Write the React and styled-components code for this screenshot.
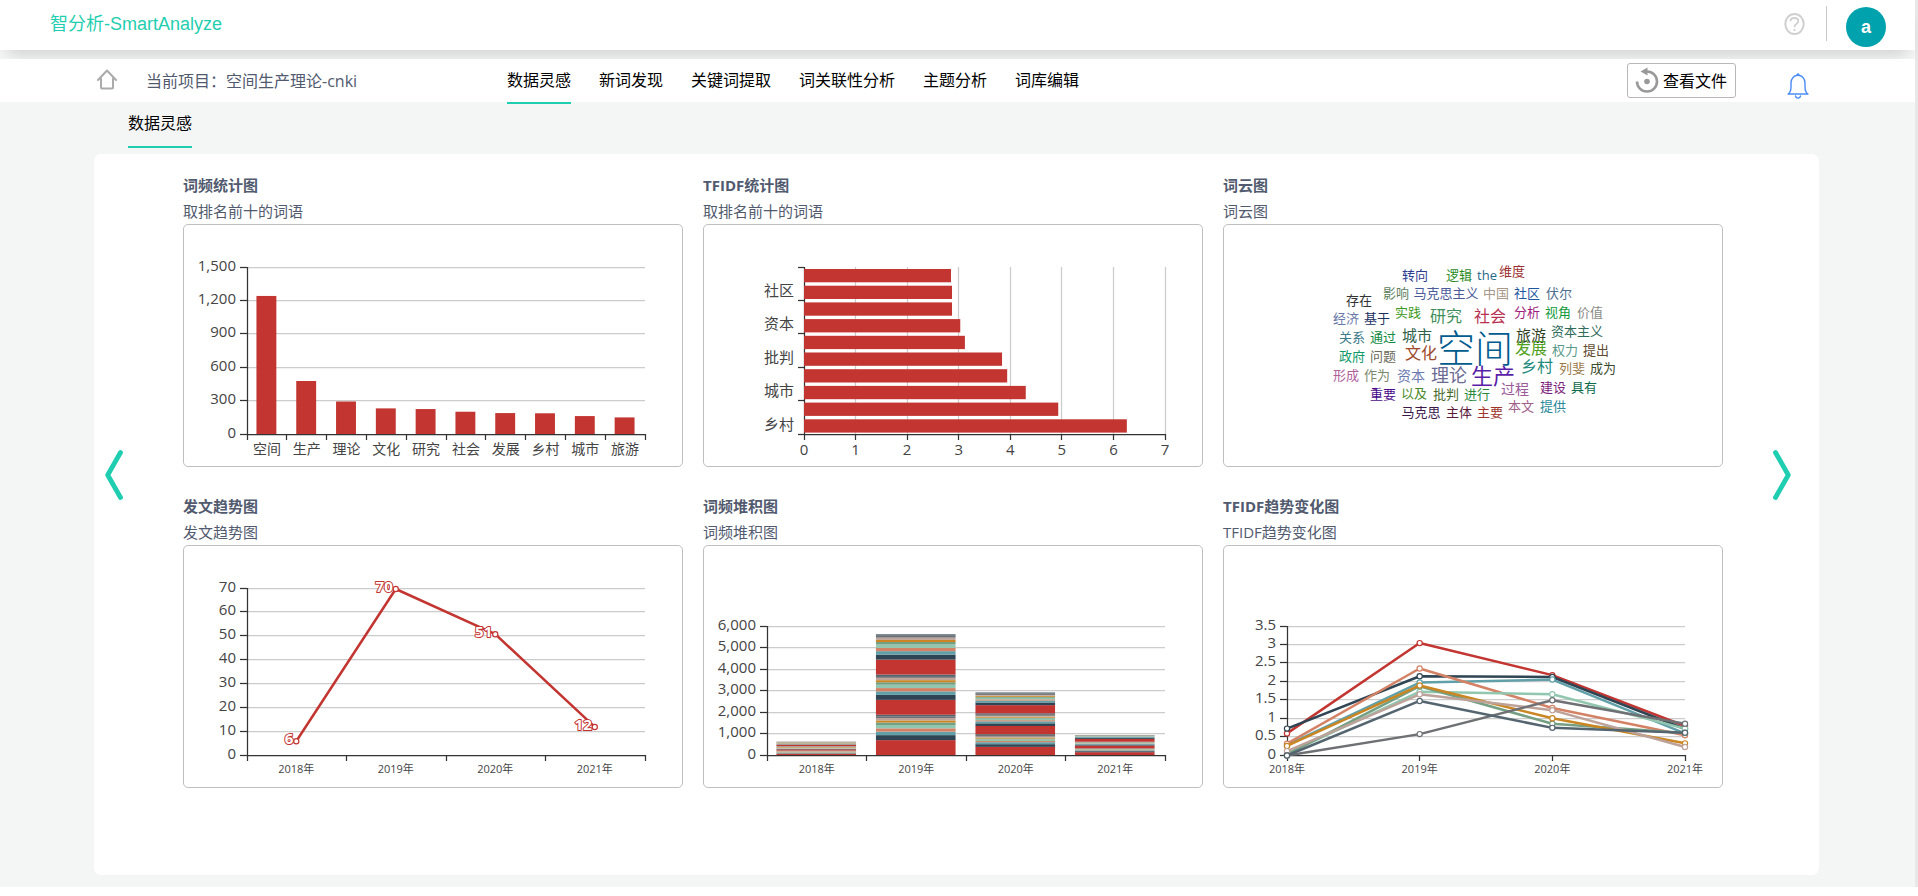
import React from "react";
import styled, { createGlobalStyle } from "styled-components";

const GlobalStyle = createGlobalStyle`
  *, *::before, *::after { box-sizing: border-box; }
  body {
    margin: 0;
    background: #ffffff;
    color: #515a6e;
    font-family: "Open Sans", "Noto Sans CJK SC", sans-serif;
    font-size: 16px;
    font-weight: 400;
  }
  a { color: inherit; text-decoration: none; }
  button { font: inherit; color: inherit; cursor: pointer; }
`;

const ACCENT = "#1fceb0";
const SERIES = [
  "#c23531", "#2f4554", "#61a0a8", "#d48265", "#91c7ae",
  "#749f83", "#ca8622", "#bda29a", "#6e7074", "#546570",
];

/* ---------- page frame ---------- */

const Page = styled.div`
  background: #f4f6f5;
  border-right: 3px solid #e8e8e8;
  margin-bottom: 9px;
  padding-bottom: 12px;
`;

const Header = styled.header`
  display: flex;
  align-items: center;
  height: 50px;
  padding: 0 29px 0 50px;
  background: #ffffff;
  box-shadow: 0 12px 16px -8px rgba(0, 0, 0, 0.16);
`;

const Brand = styled.a`
  margin-right: auto;
  padding-bottom: 2px;
  font-family: "Liberation Sans", "Noto Sans CJK SC", sans-serif;
  font-size: 18px;
  line-height: 24px;
  && { color: ${ACCENT}; }
`;

const IconButton = styled.button`
  display: flex;
  padding: 0;
  border: 0;
  background: none;
`;

const HelpButton = styled(IconButton)`
  margin-bottom: 3px;
`;

const HeaderDivider = styled.span`
  width: 1px;
  height: 35px;
  margin: 0 19px 3px 21px;
  background: #c8c8c8;
`;

const Avatar = styled.button`
  width: 40px;
  height: 40px;
  margin-top: 4px;
  padding: 0;
  border: 0;
  border-radius: 50%;
  background: #00a2ae;
  && { color: #ffffff; font-family: "Liberation Sans", sans-serif; font-weight: 700; font-size: 18px; }
`;

const NavBar = styled.nav`
  position: relative;
  display: flex;
  height: 43px;
  margin-top: 9px;
  padding: 0 106px 0 97px;
  background: #ffffff;
`;

const ProjectArea = styled.div`
  display: flex;
  align-items: center;
  gap: 29px;
  flex: 0 0 410px;
  padding-bottom: 2px;
  white-space: nowrap;
`;

const Tabs = styled.div`
  display: flex;
  gap: 28px;
  margin-right: auto;
  white-space: nowrap;
`;

const Tab = styled.a`
  height: 45px;
  line-height: 43px;
  color: #000000;
  border-bottom: 2px solid ${(p) => (p.$active ? ACCENT : "transparent")};
`;

const NavActions = styled.div`
  display: flex;
  align-items: center;
  gap: 51px;
`;

const FilesButton = styled.button`
  display: flex;
  align-items: center;
  gap: 4px;
  height: 35px;
  padding: 0 8px 2px 7px;
  border: 1px solid #b8b8b8;
  border-radius: 3px;
  background: #ffffff;
  && { color: #000000; }
`;

const BellSlot = styled.div`
  padding-top: 10px;
`;

const SubTabs = styled.div`
  display: flex;
  padding: 0 128px 6px;
`;

const SubTab = styled.a`
  height: 46px;
  line-height: 42px;
  color: #000000;
  border-bottom: 2px solid ${ACCENT};
`;

/* ---------- chart panel ---------- */

const Panel = styled.main`
  display: flex;
  min-height: 721px;
  margin: 0 96px 0 94px;
  padding: 18px 28px 18px 11px;
  border-radius: 7px;
  background: #ffffff;
`;

const PageArrow = styled(IconButton)`
  align-self: flex-start;
  width: ${(p) => (p.$next ? "68px" : "78px")};
  margin-top: 278px;
  justify-content: ${(p) => (p.$next ? "flex-end" : "flex-start")};
`;

const ChartGrid = styled.div`
  flex: 1;
  min-width: 0;
  display: grid;
  grid-template-columns: repeat(3, minmax(0, 1fr));
  align-content: start;
  gap: 26px 20px;
`;

const Title = styled.h2`
  margin: 0;
  font-size: 15px;
  line-height: 26px;
  font-weight: 700;
`;

const Subtitle = styled.p`
  margin: 0;
  font-size: 15px;
  line-height: 26px;
`;

const Frame = styled.div`
  height: 243px;
  border: 1px solid #bfbfbf;
  border-radius: 5px;
`;

const ChartSvg = styled.svg`
  display: block;
  width: 100%;
  height: 100%;
`;

const AxisText = styled.text`
  fill: #444444;
  font-size: ${(p) => p.$size}px;
  text-anchor: ${(p) => p.$anchor || "middle"};
`;

const PointLabel = styled.text`
  fill: #ffffff;
  stroke: #c23531;
  stroke-width: 2px;
  stroke-linejoin: round;
  paint-order: stroke;
  font-size: 15px;
  font-weight: 700;
  text-anchor: end;
`;

const CloudWord = styled.text`
  fill: ${(p) => p.$color};
  font-size: ${(p) => p.$size}px;
  font-weight: ${(p) => (p.$size > 30 ? 300 : 400)};
  text-anchor: middle;
`;

/* ---------- chart geometry ---------- */

const LEFT = 64;
const RIGHT = 462;
const BOTTOM = 210;
const YEARS = ["2018年", "2019年", "2020年", "2021年"];
const snap = (v) => Math.round(v - 0.5) + 0.5;

function Chart({ label, children }) {
  return (
    <ChartSvg viewBox="1 1 498 241" role="img" aria-label={label}>
      {children}
    </ChartSvg>
  );
}

function ValueAxis({ labels, top }) {
  const step = (BOTTOM - top) / (labels.length - 1);
  return (
    <g strokeWidth="1.25">
      {labels.map((text, i) => {
        const y = snap(BOTTOM - i * step);
        return (
          <g key={text}>
            {i > 0 && <line x1={LEFT} x2={RIGHT} y1={y} y2={y} stroke="#cccccc" />}
            <line x1={LEFT - 7} x2={LEFT} y1={y} y2={y} stroke="#333333" />
            <AxisText $size={15} $anchor="end" x={LEFT - 11} y={y + 3}>{text}</AxisText>
          </g>
        );
      })}
    </g>
  );
}

function AxisLines({ top, ticks, left = LEFT }) {
  return (
    <g stroke="#333333" strokeWidth="1.25">
      <line x1={snap(left)} x2={snap(left)} y1={top} y2={BOTTOM + 1} />
      <line x1={left} x2={RIGHT + 1} y1={BOTTOM + 0.5} y2={BOTTOM + 0.5} />
      {ticks.map((x) => (
        <line key={x} x1={snap(x)} x2={snap(x)} y1={BOTTOM} y2={BOTTOM + 6} />
      ))}
    </g>
  );
}

const bandTicks = (n) => Array.from({ length: n + 1 }, (_, i) => LEFT + (i * (RIGHT - LEFT)) / n);

function YearLabels({ xs }) {
  return xs.map((x, i) => (
    <AxisText key={YEARS[i]} $size={11} x={x} y={228}>{YEARS[i]}</AxisText>
  ));
}

/* ---------- charts ---------- */

const FREQUENCY = [
  ["空间", 1240], ["生产", 476], ["理论", 292], ["文化", 230], ["研究", 224],
  ["社会", 200], ["发展", 188], ["乡村", 186], ["城市", 161], ["旅游", 149],
];

function FrequencyChart() {
  const band = (RIGHT - LEFT) / 10;
  return (
    <Chart label="词频统计图">
      <ValueAxis top={43} labels={["0", "300", "600", "900", "1,200", "1,500"]} />
      {FREQUENCY.map(([word, n], i) => {
        const h = (n / 1500) * 167;
        return (
          <g key={word}>
            <rect x={LEFT + band * i + band / 4 - 0.5} y={BOTTOM - h} width={band / 2} height={h} fill="#c23531" />
            <AxisText $size={14} x={LEFT + band * (i + 0.5)} y={230}>{word}</AxisText>
          </g>
        );
      })}
      <AxisLines top={43} ticks={bandTicks(10)} />
    </Chart>
  );
}

const TFIDF = [2.85, 2.87, 2.87, 3.03, 3.12, 3.84, 3.94, 4.3, 4.93, 6.26];
const TFIDF_LABELS = ["社区", "资本", "批判", "城市", "乡村"];

function TfidfChart() {
  const left = 101;
  const unit = (RIGHT - left) / 7;
  const band = 16.7;
  const xs = [0, 1, 2, 3, 4, 5, 6, 7].map((n) => left + n * unit);
  return (
    <Chart label="TFIDF统计图">
      {xs.slice(1).map((x) => (
        <line key={x} x1={snap(x)} x2={snap(x)} y1={43} y2={BOTTOM} stroke="#cccccc" strokeWidth="1.25" />
      ))}
      <AxisLines top={43} left={left} ticks={xs} />
      {[0, 2, 4, 6, 8, 10].map((n) => (
        <line key={n} x1={left - 6} x2={left} y1={snap(43 + n * band)} y2={snap(43 + n * band)} stroke="#333333" strokeWidth="1.25" />
      ))}
      {TFIDF.map((v, i) => (
        <rect key={i} x={left} y={43.5 + band * i + 1.5} width={v * unit} height={13.3} fill="#c23531" />
      ))}
      {TFIDF_LABELS.map((word, i) => (
        <AxisText key={word} $size={15} $anchor="end" x={left - 10} y={72 + i * band * 2}>{word}</AxisText>
      ))}
      {xs.map((x, n) => (
        <AxisText key={n} $size={15} x={x} y={231}>{n}</AxisText>
      ))}
    </Chart>
  );
}

/* word, centre x, centre y, size, colour */
const WORDS = [
  ["转向", 192, 52, 13, "#2d3d8f"], ["逻辑", 236, 52, 13, "#2a8a1e"], ["the", 264, 52, 13, "#1f6a8a"],
  ["维度", 289, 48, 13, "#9c3030"], ["影响", 173, 70, 13, "#5f7f5f"], ["马克思主义", 223, 70, 13, "#4a5a9a"],
  ["中国", 273, 70, 13, "#a89888"], ["社区", 304, 70, 13, "#1e56a0"], ["伏尔", 336, 70, 13, "#4f6f8f"],
  ["存在", 136, 77, 13, "#333333"], ["经济", 123, 95, 13, "#6a7aa8"], ["基于", 154, 95, 13, "#1c2f5f"],
  ["实践", 185, 89, 13, "#3c9a24"], ["研究", 223, 93, 16, "#3f8f5a"], ["社会", 267, 93, 16, "#b83050"],
  ["分析", 304, 89, 13, "#a01e7e"], ["视角", 335, 89, 13, "#109a3a"], ["价值", 367, 89, 13, "#8a8a86"],
  ["关系", 129, 114, 13, "#3c7a8a"], ["通过", 160, 114, 13, "#108a40"], ["城市", 194, 112, 15, "#2f5f4a"],
  ["空间", 252, 124, 38, "#005b8e"], ["旅游", 308, 112, 15, "#2f3f1f"], ["资本主义", 354, 108, 13, "#2f6a5a"],
  ["发展", 308, 125, 16, "#4fa020"], ["政府", 129, 133, 13, "#109a6a"], ["问题", 160, 133, 13, "#6a6a5a"],
  ["文化", 198, 130, 16, "#9c4a2a"], ["权力", 342, 127, 13, "#5a9a8a"], ["提出", 373, 127, 13, "#5f4a2f"],
  ["乡村", 314, 143, 16, "#1e8a7e"], ["生产", 270, 152, 22, "#5a1ea8"], ["理论", 226, 152, 18, "#6a6a92"],
  ["列斐", 349, 145, 13, "#9a7a4a"], ["成为", 380, 145, 13, "#3a4a2a"], ["形成", 123, 152, 13, "#b0609a"],
  ["作为", 154, 152, 13, "#7a8a6a"], ["资本", 188, 152, 14, "#6a7ab0"], ["重要", 160, 171, 13, "#4a0a8a"],
  ["以及", 191, 170, 13, "#4a8a2a"], ["批判", 223, 171, 13, "#4a6a2a"], ["进行", 254, 171, 13, "#2a8a3a"],
  ["过程", 292, 165, 14, "#9a5a9a"], ["建设", 330, 164, 13, "#7a1a7a"], ["具有", 361, 164, 13, "#0a6a4a"],
  ["马克思", 198, 189, 13, "#3a1a4a"], ["主体", 236, 189, 13, "#5a1a3a"], ["主要", 267, 189, 13, "#a0342a"],
  ["本文", 298, 183, 13, "#a0608a"], ["提供", 330, 183, 13, "#2a8a9a"],
];

function WordCloud() {
  return (
    <Chart label="词云图">
      {WORDS.map(([word, x, y, size, color]) => (
        <CloudWord key={word} x={x} y={y + Math.floor(size * 0.37)} $size={size} $color={color}>{word}</CloudWord>
      ))}
    </Chart>
  );
}

function LineSeries({ xs, values, y, color }) {
  return (
    <g fill="none" stroke={color}>
      <polyline strokeWidth="2.5" strokeLinejoin="round" points={values.map((v, i) => `${xs[i]},${y(v)}`).join(" ")} />
      {values.map((v, i) => (
        <circle key={i} cx={xs[i]} cy={y(v)} r="2.6" fill="#ffffff" strokeWidth="1.2" />
      ))}
    </g>
  );
}

function PublicationTrend() {
  const xs = [0.5, 1.5, 2.5, 3.5].map((n) => LEFT + (n * (RIGHT - LEFT)) / 4 - 0.5);
  const values = [6, 70, 51, 12];
  const y = (v) => BOTTOM + 0.5 - (v / 70) * 166.5;
  return (
    <Chart label="发文趋势图">
      <ValueAxis top={43} labels={["0", "10", "20", "30", "40", "50", "60", "70"]} />
      <AxisLines top={43} ticks={bandTicks(4)} />
      <LineSeries xs={xs} values={values} y={y} color="#c23531" />
      {values.map((v, i) => (
        <PointLabel key={v} x={xs[i] - 3} y={y(v) + 3}>{v}</PointLabel>
      ))}
      <YearLabels xs={xs} />
    </Chart>
  );
}

/* one cycle of ten words per year; the stack holds three cycles */
const STACKS = [
  [56, 19, 12, 19, 15, 15, 25, 23, 13, 9],
  [692, 232, 162, 155, 155, 116, 97, 108, 85, 70],
  [379, 124, 93, 54, 70, 46, 50, 39, 77, 38],
  [131, 46, 39, 15, 23, 15, 8, 8, 15, 9],
];

function StackChart() {
  const band = (RIGHT - LEFT) / 4;
  const scale = 129 / 6000;
  return (
    <Chart label="词频堆积图">
      <ValueAxis top={81} labels={["0", "1,000", "2,000", "3,000", "4,000", "5,000", "6,000"]} />
      {STACKS.map((cycle, i) => {
        let y = BOTTOM;
        return [...cycle, ...cycle, ...cycle].map((v, j) => {
          const h = v * scale;
          y -= h;
          return <rect key={`${i}-${j}`} x={LEFT + band * (i + 0.1) - 0.5} y={y} width={band * 0.8} height={h} fill={SERIES[j % 10]} />;
        });
      })}
      <AxisLines top={81} ticks={bandTicks(4)} />
      <YearLabels xs={[0.5, 1.5, 2.5, 3.5].map((n) => LEFT + n * band)} />
    </Chart>
  );
}

const TREND = [
  [0.6, 3.05, 2.18, 0.8], [0.73, 2.15, 2.13, 0.72], [0.28, 1.98, 2.06, 0.6], [0.32, 2.36, 1.29, 0.55],
  [0.05, 1.73, 1.66, 0.73], [0.03, 1.88, 0.86, 0.61], [0.26, 1.9, 1.01, 0.33], [0.12, 1.66, 1.23, 0.23],
  [0, 0.58, 1.5, 0.86], [0, 1.48, 0.75, 0.62],
];

function TfidfTrend() {
  const xs = [0, 1, 2, 3].map((n) => LEFT + (n * (RIGHT - LEFT)) / 3);
  const y = (v) => BOTTOM + 0.5 - (v / 3.5) * 129;
  return (
    <Chart label="TFIDF趋势变化图">
      <ValueAxis top={81} labels={["0", "0.5", "1", "1.5", "2", "2.5", "3", "3.5"]} />
      <AxisLines top={81} ticks={xs} />
      {TREND.map((values, i) => (
        <LineSeries key={i} xs={xs} values={values} y={y} color={SERIES[i]} />
      ))}
      <YearLabels xs={xs} />
    </Chart>
  );
}

/* ---------- icons ---------- */

const HomeIcon = () => (
  <svg width="20" height="21" viewBox="0 0 20 21" fill="none" stroke="#ababab" strokeWidth="2" strokeLinejoin="round" strokeLinecap="round" aria-hidden="true">
    <path d="M1 11 10 1.5 19 11M4 9.5V18.5Q4 19.5 5 19.5H15Q16 19.5 16 18.5V9.5" />
  </svg>
);

const HelpIcon = () => (
  <svg width="21" height="22" viewBox="0 0 21 22" fill="none" stroke="#d0d0d0" strokeWidth="2" aria-hidden="true">
    <ellipse cx="10.5" cy="11" rx="9.2" ry="10" />
    <path d="M6.5 8.2Q6.5 5 10.5 5 14.3 5 14.3 8.2 14.3 10 12.3 11 10.5 12 10.5 14.2M10.5 16V18" strokeWidth="1.8" />
  </svg>
);

const HistoryIcon = () => (
  <svg width="24" height="26" viewBox="0 0 24 26" fill="none" aria-hidden="true">
    <path d="M2 14.5A10 10 0 1 0 12 4.5" stroke="#999999" strokeWidth="2.6" />
    <path d="M5.5 4.5 12.5 0.5V8.5Z" fill="#999999" />
    <circle cx="12" cy="14.5" r="2.8" fill="#999999" />
  </svg>
);

const BellIcon = () => (
  <svg width="22" height="26" viewBox="0 0 22 26" fill="none" stroke="#4a8df6" strokeWidth="1.4" strokeLinecap="round" strokeLinejoin="round" aria-hidden="true">
    <path d="M1 21H21C18.5 19.5 18 17 18 14V10C18 5.5 15 2.3 11 2.3S4 5.5 4 10V14C4 17 3.5 19.5 1 21ZM8.5 23Q9 25.2 11 25.2T13.5 23M10 1.6Q11 .4 12 1.6" />
  </svg>
);

const ChevronIcon = ({ next }) => (
  <svg width="18" height="50" viewBox="0 0 18 50" fill="none" stroke={ACCENT} strokeWidth="4.8" strokeLinecap="round" strokeLinejoin="round" aria-hidden="true">
    <path d={next ? "M2.5 2.5 15.3 25 2.5 47.5" : "M15.5 2.5 2.7 25 15.5 47.5"} />
  </svg>
);

/* ---------- page ---------- */

const CARDS = [
  ["词频统计图", "取排名前十的词语", FrequencyChart],
  ["TFIDF统计图", "取排名前十的词语", TfidfChart],
  ["词云图", "词云图", WordCloud],
  ["发文趋势图", "发文趋势图", PublicationTrend],
  ["词频堆积图", "词频堆积图", StackChart],
  ["TFIDF趋势变化图", "TFIDF趋势变化图", TfidfTrend],
];

const TABS = ["数据灵感", "新词发现", "关键词提取", "词关联性分析", "主题分析", "词库编辑"];

export default function App() {
  return (
    <>
      <GlobalStyle />
      <Page>
        <Header>
          <Brand href="#">智分析-SmartAnalyze</Brand>
          <HelpButton aria-label="帮助"><HelpIcon /></HelpButton>
          <HeaderDivider />
          <Avatar>a</Avatar>
        </Header>
        <NavBar>
          <ProjectArea>
            <IconButton as="a" href="#" aria-label="首页"><HomeIcon /></IconButton>
            <span>当前项目：空间生产理论-cnki</span>
          </ProjectArea>
          <Tabs>
            {TABS.map((name, i) => (
              <Tab key={name} href="#" $active={i === 0}>{name}</Tab>
            ))}
          </Tabs>
          <NavActions>
            <FilesButton><HistoryIcon />查看文件</FilesButton>
            <BellSlot>
              <IconButton aria-label="通知"><BellIcon /></IconButton>
            </BellSlot>
          </NavActions>
        </NavBar>
        <SubTabs>
          <SubTab href="#">数据灵感</SubTab>
        </SubTabs>
        <Panel>
          <PageArrow aria-label="上一页"><ChevronIcon /></PageArrow>
          <ChartGrid>
            {CARDS.map(([title, subtitle, Body]) => (
              <section key={title}>
                <Title>{title}</Title>
                <Subtitle>{subtitle}</Subtitle>
                <Frame><Body /></Frame>
              </section>
            ))}
          </ChartGrid>
          <PageArrow $next aria-label="下一页"><ChevronIcon next /></PageArrow>
        </Panel>
      </Page>
    </>
  );
}
